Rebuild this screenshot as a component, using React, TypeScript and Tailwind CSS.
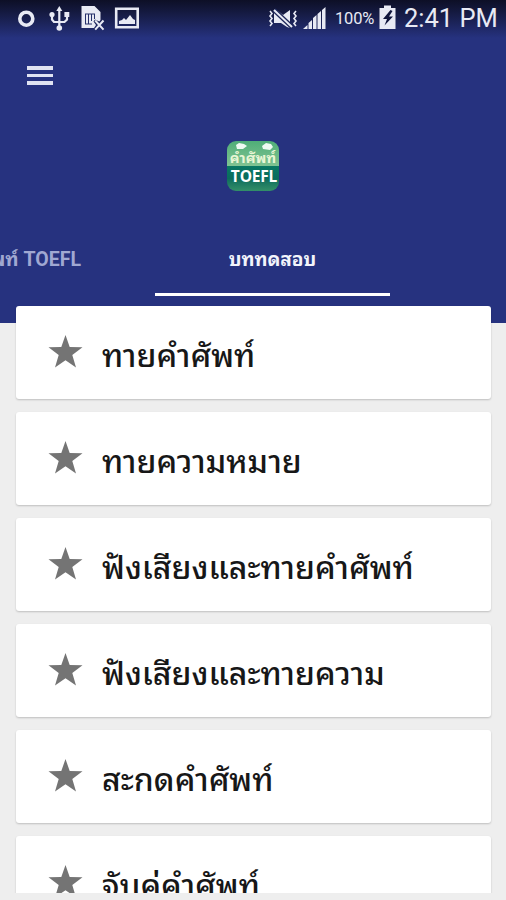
import { ReactNode } from "react"

const quizzes = [
    'ทายคำศัพท์',
    'ทายความหมาย',
    'ฟังเสียงและทายคำศัพท์',
    'ฟังเสียงและทายความ',
    'สะกดคำศัพท์',
    'จับคู่คำศัพท์',
]

const font = "font-[Roboto,'Noto_Sans_Thai_Looped',Loma,Waree,Garuda,'Noto_Sans_Thai','Noto_Sans',sans-serif]"

function StatusBar() {
    return (
        <div className="flex h-[38px] items-start bg-linear-to-b from-[#0d0f26] to-[#26327f] pl-[17px] pr-[9px] text-[#e8eaf4]">
            <svg className="mt-[9px] h-[19px] w-[19px] shrink-0" viewBox="0 0 19 19" fill="none" stroke="currentColor">
                <circle cx="9.3" cy="9.7" r="6.5" strokeWidth="3.6" />
            </svg>
            <svg className="ml-[13px] mt-[6px] h-[25px] w-[21px] shrink-0" viewBox="0 0 21 25" fill="none" stroke="currentColor" strokeWidth="2.2">
                <path d="M10.3 4v17M3 10v3.500l2 2.500h10.500l2.500-2.500v-4" />
                <path d="M10.3 0l3 5h-6z" fill="currentColor" stroke="none" />
                <circle cx="10.3" cy="22" r="2.8" fill="currentColor" stroke="none" />
                <circle cx="3" cy="8.500" r="2.6" fill="currentColor" stroke="none" />
                <path d="M15.400 6h4.900v5h-4.900z" fill="currentColor" stroke="none" />
            </svg>
            <svg className="ml-[11px] mt-[6px] h-[25px] w-[24px] shrink-0" viewBox="0 0 24 25" fill="none">
                <path d="M.5 0h13l6 6v8l-1.200 1.500-4.300-2-1.500 2 2.500 3.500-2 3H.5z" fill="currentColor" />
                <path d="M4 8h10M4.500 8v10M4 18h7M7.500 8v10M10.500 8v7M13.500 8v5" stroke="#26306b" strokeWidth="1" />
                <path d="M14.200 14.500l8.300 9.200M22.500 14.500l-8.300 9.200" stroke="currentColor" strokeWidth="2" />
            </svg>
            <svg className="ml-[9px] mt-[7px] h-[22px] w-[26px] shrink-0" viewBox="0 0 26 22">
                <path d="M2.200 1.700h21.500v18.600H2.200z" fill="none" stroke="currentColor" strokeWidth="2.6" />
                <path d="M5 17v-3l3-1 2-2 2 2 4-5 3 4 2 1v4z" fill="currentColor" />
            </svg>
            <div className="grow" />
            <svg className="mt-[8px] h-[21px] w-[31px] shrink-0" viewBox="0 0 31 21" fill="none" stroke="currentColor">
                <path d="M6 3h4l5 4 7-5v18l-3-1-6-4H6z" fill="currentColor" stroke="none" />
                <path d="M6 2l18 17" stroke="#1c2558" strokeWidth="4.5" />
                <path d="M6 2l18 17" strokeWidth="2" />
                <path d="M2 3l2 2.500L2 8l2 2.500L2 13l2 2.500L2 18M28 3l-2 2.500L28 8l-2 2.500 2 2.500-2 2.500 2 2.500" strokeWidth="1.6" />
            </svg>
            <svg className="ml-[4px] mt-[6px] h-[24px] w-[25px] shrink-0" viewBox="0 0 25 24" fill="currentColor">
                <path d="M0 23l4.500-4v4zM5.500 23v-6l3.500-3v9zM10 23V12l3.500-3v14zM14.500 23V8L18 5v18zM19 23V4l3.500-3v22z" />
            </svg>
            <span className="ml-[7px] mt-[9px] w-[40px] whitespace-nowrap text-[16.5px] leading-[20px] tracking-[-0.2px]">100%</span>
            <svg className="ml-[4px] mt-[5px] h-[25px] w-[18px] shrink-0" viewBox="0 0 18 25">
                <path d="M.5 3H5V.5h7V3h4.500v21H.5z" fill="currentColor" />
                <path d="M11.500 5L4 14h4L5.500 20.500 14 11.500h-4L13.500 6z" fill="#10153c" />
            </svg>
            <span className="ml-[7px] mt-[3px] w-[93px] whitespace-nowrap text-[25.5px] leading-[30px]">2:41 PM</span>
        </div>
    )
}

function AppLogo() {
    return (
        <div className="relative flex h-[50px] w-[52px] flex-col overflow-hidden rounded-[9px] text-center font-bold">
            <div className="h-[25px] bg-linear-to-b from-[#4fae78] to-[#7fc392] pt-[10px] text-[14.5px] leading-[15px] text-[#e9f6d5]">คำศัพท์</div>
            <div className="h-[25px] bg-linear-to-b from-[#087863] via-[#0a6c5c] to-[#338f68] pl-[2px] font-['Open_Sans'] text-[15.5px] leading-[21px] tracking-[-0.2px] text-white">TOEFL</div>
            <svg className="absolute inset-0" viewBox="0 0 52 50" fill="#eefaf3">
                <path d="M9 4l3-2 5 1 3 2-4 3-6 0zM35 5l4-3 5 1 2 3-3 3-7-1z" />
            </svg>
        </div>
    )
}

function Card({ children }: { children: ReactNode }) {
    return (
        <li className="flex h-[93px] shrink-0 items-center rounded-[3px] bg-white pl-[32px] shadow-[0_1px_2px_rgba(0,0,0,0.2)]">
            <svg className="mb-[2px] h-[34px] w-[35px] shrink-0" viewBox="0 0 35 34" fill="#747474">
                <path d="M17.500 0l4.200 11.900 12.800.3-10.200 7.800 3.700 12.500-10.500-7.300-10.500 7.300 3.700-12.500L.5 12.200l12.800-.3z" />
            </svg>
            <span className="ml-[19px] mt-[6px] whitespace-nowrap text-[32px] font-medium leading-[44px] text-[#171717]">{children}</span>
        </li>
    )
}

export default function App() {
    return (
        <div className={`${font} flex h-[900px] w-[506px] flex-col overflow-hidden bg-[#eeeeee]`}>
            <header className="h-[323px] shrink-0 bg-[#26327f]">
                <StatusBar />
                <button type="button" className="ml-[27px] mt-[28px] flex w-[26px] flex-col gap-[4px]" aria-label="Menu">
                    <span className="h-[3.5px] w-full bg-[#dfe3f2]" />
                    <span className="h-[3.5px] w-full bg-[#dfe3f2]" />
                    <span className="h-[3.5px] w-full bg-[#dfe3f2]" />
                </button>
                <div className="mt-[56px] flex justify-center">
                    <AppLogo />
                </div>
                <nav className="mt-[45px] flex h-[60px] font-bold leading-[48px]">
                    <div className="flex w-[155px] shrink-0 justify-end whitespace-nowrap pr-[74px] text-[19.5px] text-[#a0a8d2]">คำศัพท์ TOEFL</div>
                    <div className="w-[235px] border-b-[3px] border-white text-center text-[19px] text-[#f2f4fb]">บททดสอบ</div>
                </nav>
            </header>
            <ul className="relative mx-[16px] -mt-[17px] mr-[15px] flex h-[587px] flex-col gap-[13px] [clip-path:inset(-3px_-3px_0_-3px)]">
                {quizzes.map(quiz => (
                    <Card key={quiz}>{quiz}</Card>
                ))}
            </ul>
        </div>
    )
}
